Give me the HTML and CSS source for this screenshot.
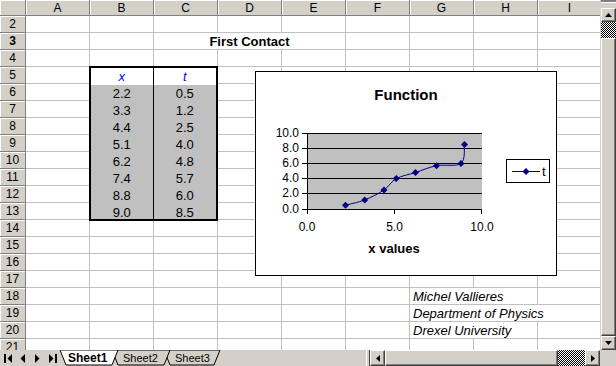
FILE: index.html
```html
<!DOCTYPE html>
<html>
	<head>
		<meta charset="UTF-8">
		<title>First Contact</title>
		<link rel="stylesheet" href="styles.css">
		<script>
			window.onload=function(){
				var sheet=document.getElementById("sheet");
				var first=sheet.firstChild;
				var cols="ABCDEFGHI";

				function put(cls,text,row,col){
					var el=document.createElement("div");
					el.className=cls;
					if(text!==null) el.textContent=text;
					el.style.gridRow=row;
					el.style.gridColumn=col;
					sheet.insertBefore(el,first);
				}

				//column headers
				put("hd corner",null,1,1);
				for(var c=0;c<cols.length;c++){
					put("hd col",cols[c],1,c+2);
				}

				//rows 2..21
				for(var r=2;r<=21;r++){
					put("hd row"+(r==3?" active":""),r,r,1);
					for(var c=0;c<cols.length;c++){
						put("cell",null,r,c+2);
					}
				}

				//chart line
				var pts=[[2.2,0.5],[3.3,1.2],[4.4,2.5],[5.1,4.0],[6.2,4.8],[7.4,5.7],[8.8,6.0],[9.0,8.5]];
				var p=pts.map(function(a){return [52+a[0]*17.5,138-a[1]*7.6];});
				var d="M"+p[0][0]+","+p[0][1];
				for(var i=0;i<p.length-1;i++){
					var p0=p[i-1]||p[i],p1=p[i],p2=p[i+1],p3=p[i+2]||p2;
					d+=" C"+(p1[0]+(p2[0]-p0[0])/6)+","+(p1[1]+(p2[1]-p0[1])/6)+" "+(p2[0]-(p3[0]-p1[0])/6)+","+(p2[1]-(p3[1]-p1[1])/6)+" "+p2[0]+","+p2[1];
				}
				document.getElementById("curve").setAttribute("d",d);
				var marks="";
				p.forEach(function(q){
					marks+='<polygon points="'+q[0]+','+(q[1]-3.5)+' '+(q[0]+3.5)+','+q[1]+' '+q[0]+','+(q[1]+3.5)+' '+(q[0]-3.5)+','+q[1]+'"/>';
				});
				document.getElementById("marks").innerHTML=marks;
			};
		</script>
	</head>
	<body>
		<div class="book">
			<div class="sheet" id="sheet">
				<div class="title">First Contact</div>

				<div class="table">
					<div class="th">x</div>
					<div class="th">t</div>
					<div class="td">2.2</div><div class="td">0.5</div>
					<div class="td">3.3</div><div class="td">1.2</div>
					<div class="td">4.4</div><div class="td">2.5</div>
					<div class="td">5.1</div><div class="td">4.0</div>
					<div class="td">6.2</div><div class="td">4.8</div>
					<div class="td">7.4</div><div class="td">5.7</div>
					<div class="td">8.8</div><div class="td">6.0</div>
					<div class="td">9.0</div><div class="td">8.5</div>
				</div>

				<div class="sig r18">Michel Vallieres</div>
				<div class="sig r19">Department of Physics</div>
				<div class="sig r20">Drexel University</div>

				<svg class="chart" width="302" height="205" viewBox="0 0 302 205">
					<rect x="0.5" y="0.5" width="301" height="204" fill="#fff" stroke="#000"/>
					<text x="151" y="29" class="ctitle">Function</text>
					<rect x="52" y="62" width="175" height="76" fill="#c0c0c0"/>
					<g stroke="#000" stroke-width="1" shape-rendering="crispEdges">
						<line x1="47" y1="62.5" x2="227" y2="62.5"/>
						<line x1="47" y1="77.5" x2="227" y2="77.5"/>
						<line x1="47" y1="92.5" x2="227" y2="92.5"/>
						<line x1="47" y1="107.5" x2="227" y2="107.5"/>
						<line x1="47" y1="122.5" x2="227" y2="122.5"/>
						<line x1="47" y1="138.5" x2="227" y2="138.5"/>
						<line x1="52.5" y1="62" x2="52.5" y2="143"/>
						<line x1="139.5" y1="138" x2="139.5" y2="143"/>
						<line x1="226.5" y1="138" x2="226.5" y2="143"/>
					</g>
					<g class="ylab">
						<text x="44" y="66">10.0</text>
						<text x="44" y="81">8.0</text>
						<text x="44" y="96">6.0</text>
						<text x="44" y="111">4.0</text>
						<text x="44" y="126">2.0</text>
						<text x="44" y="142">0.0</text>
					</g>
					<g class="xlab">
						<text x="52" y="160">0.0</text>
						<text x="139.5" y="160">5.0</text>
						<text x="227" y="160">10.0</text>
					</g>
					<text x="139" y="182" class="xtitle">x values</text>
					<path id="curve" d="" fill="none" stroke="#000080" stroke-width="1"/>
					<g id="marks" fill="#000080"></g>
					<rect x="251.5" y="88.5" width="43" height="23" fill="#fff" stroke="#000"/>
					<line x1="257" y1="100.5" x2="285" y2="100.5" stroke="#000080"/>
					<polygon points="271,97 274.5,100.5 271,104 267.5,100.5" fill="#000080"/>
					<text x="287" y="105" class="ltext">t</text>
				</svg>
			</div>

			<div class="vbar">
				<div class="split"></div>
				<div class="btn"><svg width="7" height="4"><polygon points="3.5,0 7,4 0,4"/></svg></div>
				<div class="track top"></div>
				<div class="thumb"></div>
				<div class="btn"><svg width="7" height="4"><polygon points="0,0 7,0 3.5,4"/></svg></div>
			</div>

			<div class="bottom">
				<div class="navs">
					<span class="nav"><svg width="8" height="9"><rect x="0" y="0" width="2" height="9"/><polygon points="8,0 8,9 3.5,4.5"/></svg></span>
					<span class="nav"><svg width="5" height="9"><polygon points="5,0 5,9 0.5,4.5"/></svg></span>
					<span class="nav"><svg width="5" height="9"><polygon points="0,0 0,9 4.5,4.5"/></svg></span>
					<span class="nav"><svg width="8" height="9"><polygon points="0,0 0,9 4.5,4.5"/><rect x="6" y="0" width="2" height="9"/></svg></span>
				</div>
				<svg class="tabs" width="306" height="16">
					<polygon points="104,0 160,0 154,15 110,15" fill="#d4d0c8" stroke="#000"/>
					<polygon points="52,0 110,0 104,15 58,15" fill="#d4d0c8" stroke="#000"/>
					<polygon points="0,0 58,0 52,15 6,15" fill="#fff" stroke="#000"/>
					<text x="8" y="12" class="tab on">Sheet1</text>
					<text x="63" y="12" class="tab">Sheet2</text>
					<text x="115" y="12" class="tab">Sheet3</text>
				</svg>
				<div class="hbar">
					<div class="hsplit"></div>
					<div class="btn"><svg width="4" height="7"><polygon points="0,3.5 4,0 4,7"/></svg></div>
					<div class="thumb"></div>
					<div class="track"></div>
					<div class="btn"><svg width="4" height="7"><polygon points="0,0 4,3.5 0,7"/></svg></div>
				</div>
			</div>
			<div class="box"></div>
		</div>
	</body>
</html>
```

FILE: styles.css
```css
body{
	margin: 0;
	background: #d4d0c8;
	font-family: "Liberation Sans", Arial, sans-serif;
}
.book{
	width: 616px;
	height: 366px;
	display: grid;
	grid-template-columns: 600px 16px;
	grid-template-rows: 350px 16px;
	overflow: hidden;
	background: #d4d0c8;
}
.sheet{
	position: relative;
	overflow: hidden;
	background: #fff;
	display: grid;
	grid-template-columns: 26px repeat(9, 64px);
	grid-template-rows: 16px repeat(20, 17px);
	font-size: 13px;
}
.hd{
	box-sizing: border-box;
	background: #d4d0c8;
	border-right: 1px solid #808080;
	border-bottom: 1px solid #808080;
	box-shadow: inset 1px 1px #fff;
	font-size: 12px;
	text-align: center;
	line-height: 16px;
	color: #000;
}
.hd.active{
	font-weight: bold;
}
.cell{
	box-sizing: border-box;
	border-right: 1px solid #c0c0c0;
	border-bottom: 1px solid #c0c0c0;
}

/* text that spans over cells */
.title{
	grid-row: 3;
	grid-column: 4 / 7;
	z-index: 1;
	box-sizing: border-box;
	background: #fff;
	border-right: 1px solid #c0c0c0;
	border-bottom: 1px solid #c0c0c0;
	text-align: center;
	font-weight: bold;
	line-height: 17px;
}
.sig{
	grid-column: 8 / 10;
	z-index: 1;
	box-sizing: border-box;
	background: #fff;
	border-right: 1px solid #c0c0c0;
	border-bottom: 1px solid #c0c0c0;
	font-style: italic;
	padding-left: 3px;
	line-height: 17px;
	white-space: nowrap;
}
.sig.r18{ grid-row: 18; }
.sig.r19{ grid-row: 19; grid-column: 8 / 11; }
.sig.r20{ grid-row: 20; }

.table{
	grid-row: 5 / 14;
	grid-column: 3 / 5;
	z-index: 1;
	margin: -1px 0 -1px -1px;
	border: 2px solid #000;
	display: grid;
	grid-template-columns: 1fr 1fr;
	grid-template-rows: repeat(9, 1fr);
	background: #c0c0c0;
	overflow: hidden;
}
.th, .td{
	text-align: center;
	line-height: 17px;
}
.th{
	background: #fff;
	color: #00f;
	font-style: italic;
}
.th:nth-child(odd), .td:nth-child(odd){
	border-right: 1px solid #000;
}

.chart{
	position: absolute;
	left: 255px;
	top: 71px;
	z-index: 2;
	font-family: "Liberation Sans", Arial, sans-serif;
}
.ctitle{
	font-size: 15px;
	font-weight: bold;
	text-anchor: middle;
}
.ylab text{
	font-size: 12px;
	text-anchor: end;
}
.xlab text{
	font-size: 12px;
	text-anchor: middle;
}
.xtitle{
	font-size: 13px;
	font-weight: bold;
	text-anchor: middle;
}
.ltext{
	font-size: 13px;
}

/* scroll bars */
.vbar{
	display: flex;
	flex-direction: column;
	border-left: 1px solid #d4d0c8;
}
.split{
	height: 6px;
	border-top: 2px solid #808080;
	background: #d4d0c8;
	box-shadow: inset 0 1px #fff;
}
.btn{
	box-sizing: border-box;
	flex: none;
	display: flex;
	align-items: center;
	justify-content: center;
	background: #d4d0c8;
	border: 1px solid;
	border-color: #fff #404040 #404040 #fff;
	box-shadow: inset -1px -1px #808080;
}
.vbar .btn{
	height: 14px;
}
.track{
	background: conic-gradient(#000 25%, #fff 0 50%, #000 0 75%, #fff 0) 0 0 / 2px 2px;
}
.vbar .track{
	height: 16px;
}
.thumb{
	box-sizing: border-box;
	flex: 1;
	background: #d4d0c8;
	border: 1px solid;
	border-color: #fff #404040 #404040 #fff;
	box-shadow: inset -1px -1px #808080;
}

.bottom{
	display: flex;
	align-items: stretch;
	background: #d4d0c8;
}
.navs{
	display: flex;
	flex: none;
}
.nav{
	width: 15px;
	display: flex;
	align-items: center;
	justify-content: center;
}
.tabs{
	flex: none;
}
.tab{
	font-size: 11px;
	fill: #000;
}
.tab.on{
	font-size: 12px;
	font-weight: bold;
}
.hbar{
	margin-left: auto;
	width: 234px;
	display: flex;
}
.hsplit{
	width: 4px;
	box-sizing: border-box;
	border-left: 1px solid #fff;
	border-right: 1px solid #404040;
}
.hbar .btn{
	width: 15px;
}
.hbar .thumb{
	flex: none;
	width: 173px;
}
.hbar .track{
	flex: 1;
}
.box{
	background: #d4d0c8;
}
```
